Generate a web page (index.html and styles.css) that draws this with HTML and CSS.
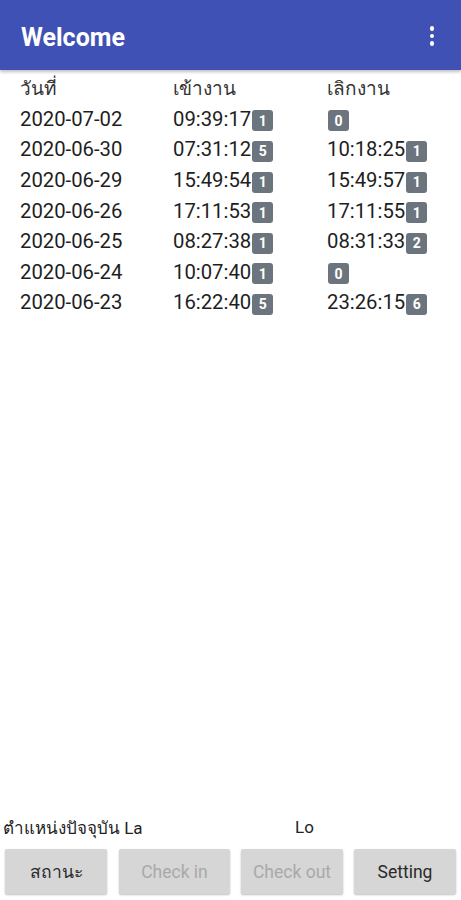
FILE: index.html
```html
<!DOCTYPE html>
<html>
<head>
<meta charset="utf-8">
<link rel="stylesheet" href="styles.css">
</head>
<body>
<div class="app">
  <header class="appbar">
    <h1 class="title">Welcome</h1>
    <div class="menu"><span></span><span></span><span></span></div>
  </header>
  <main class="table">
    <div class="row head"><div>วันที่</div><div>เข้างาน</div><div>เลิกงาน</div></div>
    <div class="row"><div>2020-07-02</div><div>09:39:17<b class="badge">1</b></div><div><b class="badge">0</b></div></div>
    <div class="row"><div>2020-06-30</div><div>07:31:12<b class="badge">5</b></div><div>10:18:25<b class="badge">1</b></div></div>
    <div class="row"><div>2020-06-29</div><div>15:49:54<b class="badge">1</b></div><div>15:49:57<b class="badge">1</b></div></div>
    <div class="row"><div>2020-06-26</div><div>17:11:53<b class="badge">1</b></div><div>17:11:55<b class="badge">1</b></div></div>
    <div class="row"><div>2020-06-25</div><div>08:27:38<b class="badge">1</b></div><div>08:31:33<b class="badge">2</b></div></div>
    <div class="row"><div>2020-06-24</div><div>10:07:40<b class="badge">1</b></div><div><b class="badge">0</b></div></div>
    <div class="row"><div>2020-06-23</div><div>16:22:40<b class="badge">5</b></div><div>23:26:15<b class="badge">6</b></div></div>
  </main>
  <footer class="bottom">
    <div class="loc"><span class="la">ตำแหน่งปัจจุบัน La</span><span class="lo">Lo</span></div>
    <div class="buttons">
      <button class="btn">สถานะ</button>
      <button class="btn disabled">Check in</button>
      <button class="btn disabled">Check out</button>
      <button class="btn">Setting</button>
    </div>
  </footer>
</div>
</body>
</html>
```
FILE: styles.css
```css
html, body {
  margin: 0;
  padding: 0;
  background: #ffffff;
}
body {
  font-family: Roboto, "Noto Sans", "DejaVu Sans", sans-serif;
  color: #222222;
}
.app {
  width: 461px;
  height: 900px;
  display: flex;
  flex-direction: column;
}
.appbar {
  height: 70px;
  background: #3f51b5;
  display: flex;
  align-items: center;
  justify-content: space-between;
  padding: 0 27px 0 21px;
  box-sizing: border-box;
  box-shadow: 0 2px 3px rgba(0,0,0,0.25);
  position: relative;
  z-index: 1;
  flex: none;
}
.title {
  margin: 0;
  color: #ffffff;
  font-size: 25px;
  font-weight: 700;
  margin-top: 4px;
}
.menu {
  display: flex;
  flex-direction: column;
  gap: 3px;
  margin-top: 2px;
}
.menu span {
  width: 4.5px;
  height: 4.5px;
  border-radius: 50%;
  background: #ffffff;
}
.table {
  flex: 1;
  padding: 3px 0 0 20px;
}
.row {
  display: grid;
  grid-template-columns: 153px 154px 1fr;
  height: 30.6px;
  align-items: center;
  font-size: 20.3px;
  color: #1e1e1e;
}
.row > div {
  display: flex;
  align-items: center;
}
.row.head {
  color: #333333;
  font-size: 19px;
}
.badge {
  flex: none;
  box-sizing: border-box;
  display: inline-flex;
  align-items: center;
  justify-content: center;
  width: 21px;
  height: 21px;
  border-radius: 3px;
  background: #6c757d;
  color: #ffffff;
  font-size: 14px;
  font-weight: 700;
  line-height: 1;
  margin: 4px 0 0 1px;
}
.bottom {
  flex: none;
  padding-bottom: 6px;
}
.loc {
  display: flex;
  font-size: 17px;
  color: #222222;
  padding-left: 3px;
  height: 20px;
  align-items: center;
  margin-bottom: 12px;
}
.la {
  width: 292px;
}
.buttons {
  display: flex;
  padding-left: 5px;
}
.btn {
  flex: none;
  height: 45px;
  border: none;
  border-radius: 2px;
  background: #d6d6d6;
  box-shadow: 0 1px 2px rgba(0,0,0,0.25);
  font-family: Roboto, "Noto Sans", sans-serif;
  font-size: 17.5px;
  color: #2a2a2a;
  padding: 0;
  width: 102px;
  margin: 0 11px 0 0;
}
.btn:first-child {
  margin-right: 12px;
}
.btn:nth-child(2) {
  width: 111px;
}
.btn:last-child {
  margin-right: 0;
}
.btn.disabled {
  color: #a9a9a9;
}
```
